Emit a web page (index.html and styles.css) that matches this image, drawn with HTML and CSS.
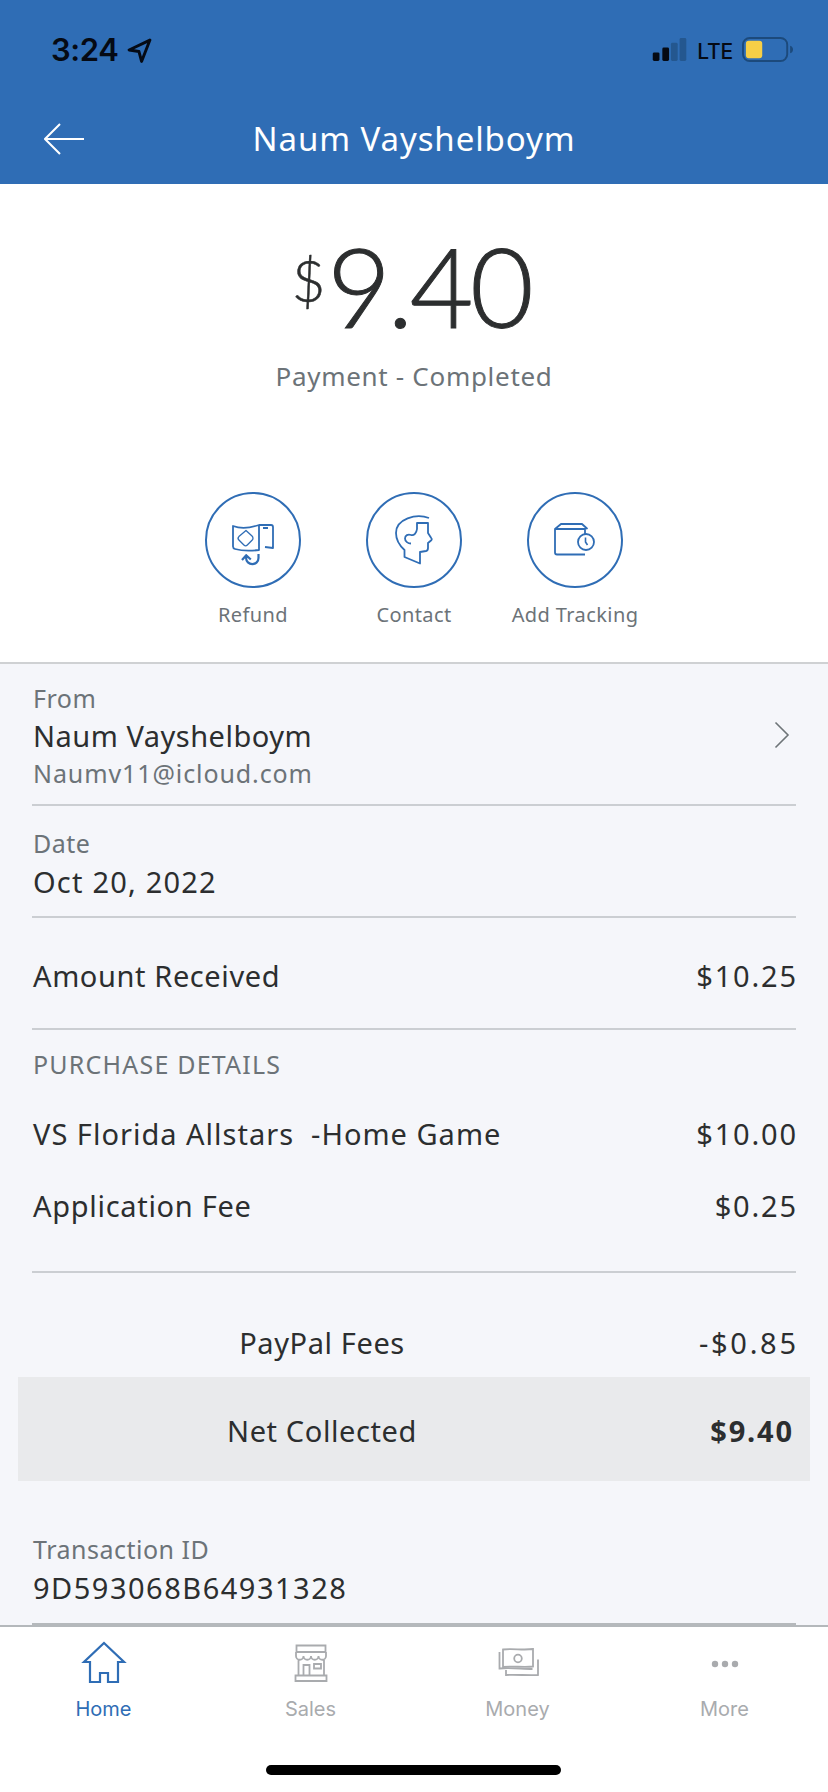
FILE: index.html
```html
<!DOCTYPE html>
<html lang="en">
<head>
<meta charset="utf-8">
<title>Naum Vayshelboym</title>
<link rel="stylesheet" href="styles.css">
</head>
<body>
<div class="screen">
  <header class="topbar">
    <div class="status">
      <div class="clock"><span class="time">3:24</span>
        <svg class="loc" viewBox="0 0 24 24"><path d="M22 2 2 11.500l9.500 1.500L14 22.500z" fill="none" stroke="#050a14" stroke-width="2.800" stroke-linejoin="round"/></svg>
      </div>
      <div class="indicators">
        <svg class="signal" viewBox="0 0 36 24"><rect x="0" y="15" width="7" height="9" rx="1.500" fill="#050a14"/><rect x="10" y="10" width="7" height="14" rx="1.500" fill="#050a14"/><rect x="19" y="5" width="7" height="19" rx="1.500" fill="#24578f"/><rect x="28" y="0" width="7" height="24" rx="1.500" fill="#24578f"/></svg>
        <span class="lte">LTE</span>
        <svg class="battery" viewBox="0 0 54 26"><rect x="1" y="1" width="46" height="24" rx="7" fill="none" stroke="#1c4a7c" stroke-width="2"/><rect x="4" y="4" width="17" height="18" rx="3" fill="#f6cf47"/><path d="M50 9c2 .6 3 2 3 4s-1 3.400-3 4z" fill="#1c4a7c"/></svg>
      </div>
    </div>
    <div class="titlebar">
      <svg class="back" viewBox="0 0 40 32"><path d="M40 16H1M16 1 1 16l15 15" fill="none" stroke="#fff" stroke-width="2"/></svg>
      <h1 class="title">Naum Vayshelboym</h1>
    </div>
  </header>

  <section class="summary">
    <div class="amount"><span class="currency">$</span><span class="figure">9.40</span></div>
    <div class="state">Payment - Completed</div>
    <div class="actions">
      <div class="action">
        <div class="ring">
          <svg viewBox="0 0 96 96" class="ring-icon"><path d="M28 34c8 3 17 2 26-1v25c-8 1-17 1-24-1-1.300-.4-2-1.200-2-2.500zM54 33h12c1.300 0 2 .7 2 2v21l-8-1M58 36h5" /><path d="M41 38.500l6 5.500c1.300 1.300 1.300 3 0 4.300l-4.700 4.700c-1 1-2.400 1-3.400 0l-5-5c-1-1-1-2.400 0-3.400z" stroke-width="1.300"/><path d="M53.500 62v4a6.200 6.200 0 0 1-12.400 0v-2.500M37 68l4.200-4.800 4.600 4.300" stroke-width="2.200"/></svg>
        </div>
        <span class="action-label">Refund</span>
      </div>
      <div class="action">
        <div class="ring">
          <svg viewBox="0 0 96 96" class="ring-icon"><path d="M63 26c-13-5-33 1-33 15 0 7 3 12 8.500 17v7l15.500 6.500V60l6-1c1.500-.3 2-1 2-3v-5l3-2.500c1-.8 1-1.600.2-2.500L62 41V31H51v6c-.5 4-3 7-6 6-3-1-6 .2-6 3.500 0 3 3 5 6 5"/></svg>
        </div>
        <span class="action-label">Contact</span>
      </div>
      <div class="action">
        <div class="ring">
          <svg viewBox="0 0 96 96" class="ring-icon"><path d="M58 62.500H30c-1.300 0-2-.7-2-2V37l6-5h21l5.500 5M28 37h30v5"/><circle cx="59" cy="50" r="8"/><path d="M58.500 45.500v4.500l2 3" stroke-width="1.600"/></svg>
        </div>
        <span class="action-label">Add Tracking</span>
      </div>
    </div>
  </section>

  <main class="details">
    <div class="block block-from">
      <div class="from-text">
        <div class="caption">From</div>
        <div class="primary name">Naum Vayshelboym</div>
        <div class="caption email">Naumv11@icloud.com</div>
      </div>
      <svg class="chevron" viewBox="0 0 16 28"><path d="M1.500 1.500 14 14 1.500 26.500" fill="none" stroke="#6e7478" stroke-width="1.600"/></svg>
    </div>
    <div class="block block-date">
      <div class="caption">Date</div>
      <div class="primary dateval">Oct 20, 2022</div>
    </div>
    <div class="block block-amount">
      <span class="primary">Amount Received</span><span class="primary num">$10.25</span>
    </div>
    <div class="block block-purchase">
      <div class="caption heading">PURCHASE DETAILS</div>
      <div class="line-item first"><span class="primary vs">VS Florida Allstars&nbsp; -Home Game</span><span class="primary num">$10.00</span></div>
      <div class="line-item second"><span class="primary app">Application Fee</span><span class="primary num">$0.25</span></div>
    </div>
    <div class="fees"><span class="primary fee-label">PayPal Fees</span><span class="primary num neg">-$0.85</span></div>
    <div class="net"><span class="primary net-label">Net Collected</span><span class="primary num net-value">$9.40</span></div>
    <div class="block block-id">
      <div class="caption tid">Transaction ID</div>
      <div class="primary idval">9D593068B64931328</div>
    </div>
  </main>

  <nav class="tabs">
    <div class="tab active">
      <svg viewBox="0 0 60 60" class="tab-icon"><path d="M30 9 50 28h-6v20H34V39h-8v9H16V28h-6z"/></svg>
      <span>Home</span>
    </div>
    <div class="tab">
      <svg viewBox="0 0 60 60" class="tab-icon"><path d="M15.500 11.500h29v6.500h-29zM15 18v4a3.700 3.700 0 0 0 7.500 0 3.700 3.700 0 0 0 7.500 0 3.700 3.700 0 0 0 7.500 0 3.700 3.700 0 0 0 7.500 0v-4M17.500 25v16M43 25v16M14.500 41.500h31v5.500h-31zM22.500 41V31h6v10M33 30h7v4.500h-7z"/></svg>
      <span>Sales</span>
    </div>
    <div class="tab">
      <svg viewBox="0 0 60 60" class="tab-icon"><path d="M15 15.500c10-1.300 20 1 30-.5v17.500c-10 1.300-20-.8-30 .5z"/><circle cx="30" cy="24.500" r="3.800"/><path d="M11.500 18v16.500c11-1.200 22 .5 33 .5M50 25.500v15.500c-11 .6-21-.6-32 0v-5"/></svg>
      <span>Money</span>
    </div>
    <div class="tab">
      <svg viewBox="0 0 60 60" class="tab-icon dots-icon"><circle cx="20" cy="30" r="3.200"/><circle cx="30" cy="30" r="3.200"/><circle cx="40" cy="30" r="3.200"/></svg>
      <span>More</span>
    </div>
    <div class="home-bar"></div>
  </nav>
</div>
</body>
</html>
```

FILE: styles.css
```css
* { box-sizing: border-box; }
html, body { margin: 0; padding: 0; }
body { background: #fff; font-family: "Noto Sans", "Liberation Sans", sans-serif; }
.screen { width: 828px; height: 1792px; display: flex; flex-direction: column; overflow: hidden; }

.topbar { height: 184px; background: #2f6db5; flex: none; }
.status { height: 100px; padding: 36px 34px 0 51px; display: flex; justify-content: space-between; align-items: flex-start; }
.clock { display: flex; align-items: center; gap: 9px; height: 28px; }
.time { font: 600 31px/28px Inter, "Liberation Sans", sans-serif; color: #050a14; letter-spacing: -.4px; }
.loc { width: 25px; height: 25px; }
.indicators { display: flex; align-items: center; gap: 9px; height: 26px; }
.signal { width: 36px; height: 23px; }
.lte { margin-top: 6px; font: 500 21px/26px Inter, "Liberation Sans", sans-serif; color: #050a14; letter-spacing: -.2px; }
.battery { width: 52px; height: 25px; }
.titlebar { position: relative; height: 78px; display: flex; align-items: center; justify-content: center; }
.back { position: absolute; left: 44px; top: 23px; width: 40px; height: 32px; }
.title { margin: 0; font-size: 33px; font-weight: 400; line-height: 40px; letter-spacing: .9px; color: #fff; }

.summary { height: 480px; flex: none; padding-top: 46px; display: flex; flex-direction: column; align-items: center; border-bottom: 2px solid #cfd1d3; }
.amount { display: flex; align-items: flex-start; height: 110px; padding-right: 6px; font-family: Lato, sans-serif; font-weight: 300; color: #2c2e2f; }
.currency { font-size: 58px; line-height: 62px; margin-right: 2px; margin-top: 19px; -webkit-text-stroke: .5px #2c2e2f; }
.figure { font-size: 110px; line-height: 110px; letter-spacing: -3.500px; -webkit-text-stroke: 1px #2c2e2f; }
.state { margin-top: 18px; font-size: 26px; line-height: 36px; letter-spacing: .7px; color: #6c7378; }
.actions { margin-top: 98px; display: flex; gap: 0; }
.action { width: 161px; display: flex; flex-direction: column; align-items: center; }
.ring { width: 96px; height: 96px; border: 2px solid #2f6db5; border-radius: 50%; }
.ring-icon { display: block; width: 96px; height: 96px; margin: -2px; fill: none; stroke: #2f6db5; stroke-width: 1.800; stroke-linejoin: round; }
.action-label { margin-top: 13px; font-size: 20px; line-height: 28px; letter-spacing: .4px; color: #6c7378; }

.details { flex: 1; background: #f5f6fa; padding: 0 32px; text-indent: 1px; display: flex; flex-direction: column; overflow: hidden; }
.primary { font-size: 29px; line-height: 36px; letter-spacing: .6px; color: #2c2e2f; }
.caption { font-size: 25px; line-height: 32px; letter-spacing: .5px; color: #6c7378; }
.num { letter-spacing: 1.800px; margin-right: -1.800px; }
.neg { letter-spacing: 2.700px; margin-right: -2.700px; }
.block { border-bottom: 2px solid #cbced2; }
.block-from { height: 142px; padding-top: 18px; display: flex; justify-content: space-between; align-items: center; }
.from-text { align-self: flex-start; }
.name { display: block; margin-top: 3px; line-height: 38px; letter-spacing: .5px; }
.email { line-height: 36px; letter-spacing: .9px; }
.chevron { width: 16px; height: 28px; margin-right: 6px; margin-bottom: 16px; }
.block-date { height: 112px; padding-top: 21px; }
.dateval { margin-top: 5px; letter-spacing: 1.200px; }
.block-amount { height: 112px; padding-top: 5px; display: flex; justify-content: space-between; align-items: center; }
.block-purchase { height: 243px; padding-top: 18px; }
.heading { letter-spacing: 1.200px; }
.line-item { display: flex; justify-content: space-between; }
.first { margin-top: 36px; }
.second { margin-top: 36px; }
.vs { letter-spacing: 1px; }
.app { letter-spacing: .7px; }
.fees { display: flex; justify-content: space-between; height: 104px; padding-top: 52px; }
.fee-label, .net-label { width: 580px; text-align: center; text-indent: 0; }
.net { margin: 0 -14px; height: 104px; background: #e9eaec; display: flex; justify-content: space-between; align-items: center; padding: 3px 18px 0 14px; }
.net-value { font-weight: 700; }
.block-id { margin-top: 52px; height: 92px; border-bottom-color: #b5b9bc; }
.idval { margin-top: 5px; letter-spacing: 1.500px; }

.tabs { position: relative; height: 167px; flex: none; background: #fff; border-top: 2px solid #b4b8bb; display: flex; align-items: flex-start; }
.tab { width: 207px; height: 100px; display: flex; flex-direction: column; align-items: center; color: #a9abae; font: 400 20px/28px Inter, "Liberation Sans", sans-serif; }
.tab span { margin-top: 1px; }
.tab-icon { width: 60px; height: 60px; margin-top: 7px; fill: none; stroke: #a9abae; stroke-width: 1.800; }
.tab.active { color: #2f6db5; }
.tab.active .tab-icon { stroke: #2f6db5; stroke-width: 2.200; }
.dots-icon { fill: #a9abae; stroke: none; }
.home-bar { position: absolute; left: 266px; top: 138px; width: 295px; height: 10px; border-radius: 5px; background: #000; }
```
